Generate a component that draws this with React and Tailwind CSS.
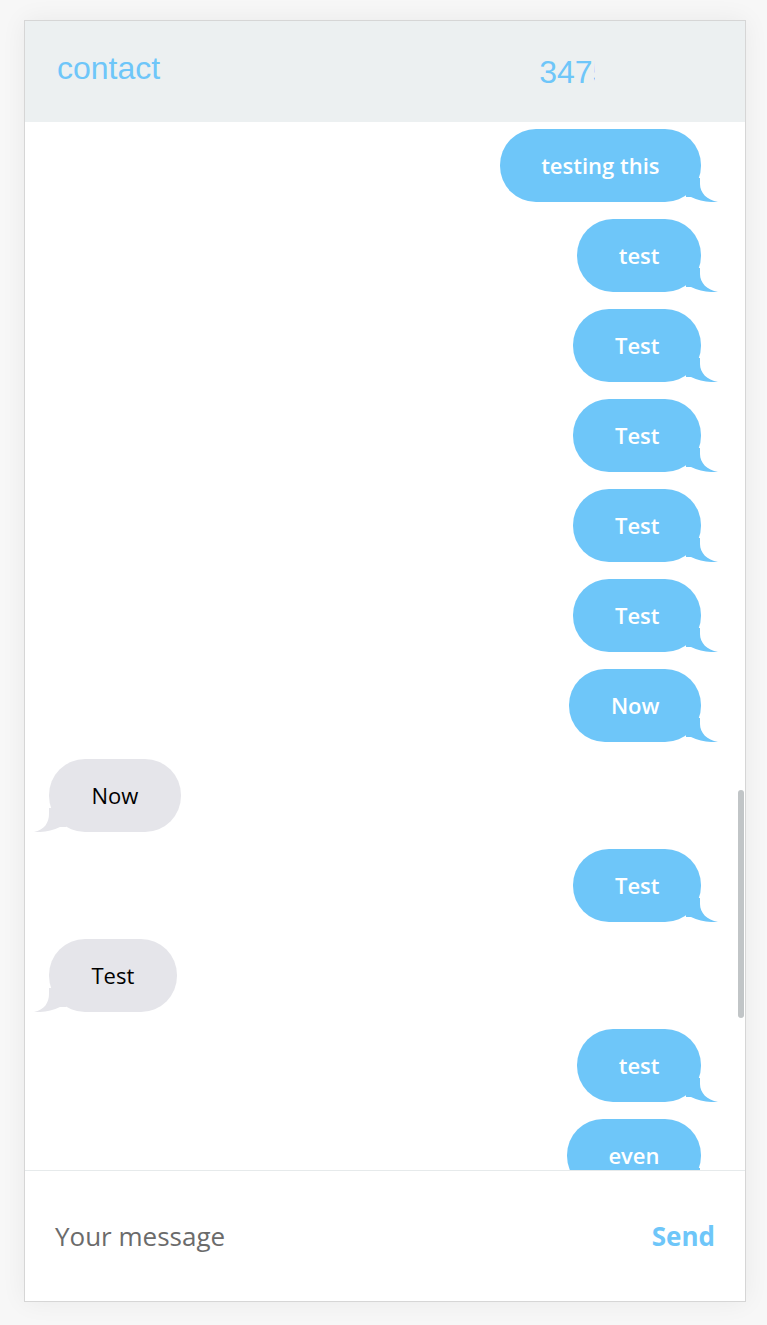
import React from 'react';

const messages = [
  { text: 'testing this', mine: true },
  { text: 'test', mine: true },
  { text: 'Test', mine: true },
  { text: 'Test', mine: true },
  { text: 'Test', mine: true },
  { text: 'Test', mine: true },
  { text: 'Now', mine: true },
  { text: 'Now', mine: false },
  { text: 'Test', mine: true },
  { text: 'Test', mine: false },
  { text: 'test', mine: true },
  { text: 'even', mine: true },
];

function Tail({ mine }) {
  if (mine) {
    return (
      <svg className="absolute bottom-0 right-[-17px]" width="32" height="24" viewBox="0 0 32 24">
        <path d="M0 0 H14 V6 C14 15 21 22 32 24 C23 24.5 13 23 5 19 L0 19 Z" fill="#6ec6f9" />
      </svg>
    );
  }
  return (
    <svg className="absolute bottom-0 left-[-15px]" width="32" height="24" viewBox="0 0 32 24">
      <path d="M32 0 H15 V6 C15 15 10 22 0 24 C8 24.5 18 23 26 19 L32 19 Z" fill="#e5e5ea" />
    </svg>
  );
}

function Bubble({ text, mine }) {
  return (
    <div className={mine ? 'flex justify-end' : 'flex justify-start'}>
      <div
        className={
          'relative h-[73px] rounded-[36px] flex items-center text-[22px] ' +
          (mine ? 'px-[41.5px] bg-[#6ec6f9] text-white font-semibold' : 'px-[42.5px] bg-[#e5e5ea] text-black')
        }
        style={{ fontFamily: '"Open Sans", sans-serif' }}
      >
        <Tail mine={mine} />
        <span className="relative">{text}</span>
      </div>
    </div>
  );
}

export default function App() {
  return (
    <div className="min-h-[1325px] bg-[#f7f7f7] pt-[20px]">
      <div className="ml-[24px] w-[722px] border border-[#d6d6d6] bg-white shadow-[0_0_24px_rgba(0,0,0,0.06)]">
        <div className="h-[100px] bg-[#ecf0f1] flex items-start">
          <div
            className="pl-[32px] pt-[27px] text-[32px] leading-[40px] text-[#6ec6f9]"
            style={{ fontFamily: '"Liberation Sans", Arial, sans-serif' }}
          >
            contact
          </div>
          <div
            className="ml-[379px] mt-[31px] w-[56px] overflow-hidden whitespace-nowrap text-[32px] leading-[40px] text-[#6ec6f9]"
            style={{ fontFamily: '"Liberation Sans", Arial, sans-serif' }}
          >
            3475551234
          </div>
        </div>

        <div className="relative h-[1049px] overflow-hidden border-t border-[#ecf0f1]">
          <div className="flex flex-col gap-[17px] pt-[7px] pl-[24px] pr-[44px]">
            {messages.map((m, i) => (
              <Bubble key={i} text={m.text} mine={m.mine} />
            ))}
          </div>
          <div className="absolute right-[1px] top-[668px] h-[228px] w-[6px] rounded-full bg-[#c1c5c7]" />
        </div>

        <div
          className="h-[131px] border-t border-[#e6eaeb] flex items-center justify-between pl-[30px] pr-[30px]"
          style={{ fontFamily: '"Open Sans", sans-serif' }}
        >
          <span className="text-[26px] text-[#6b6b6b]">Your message</span>
          <span className="text-[26px] font-bold text-[#6ec6f9]">Send</span>
        </div>
      </div>
    </div>
  );
}
